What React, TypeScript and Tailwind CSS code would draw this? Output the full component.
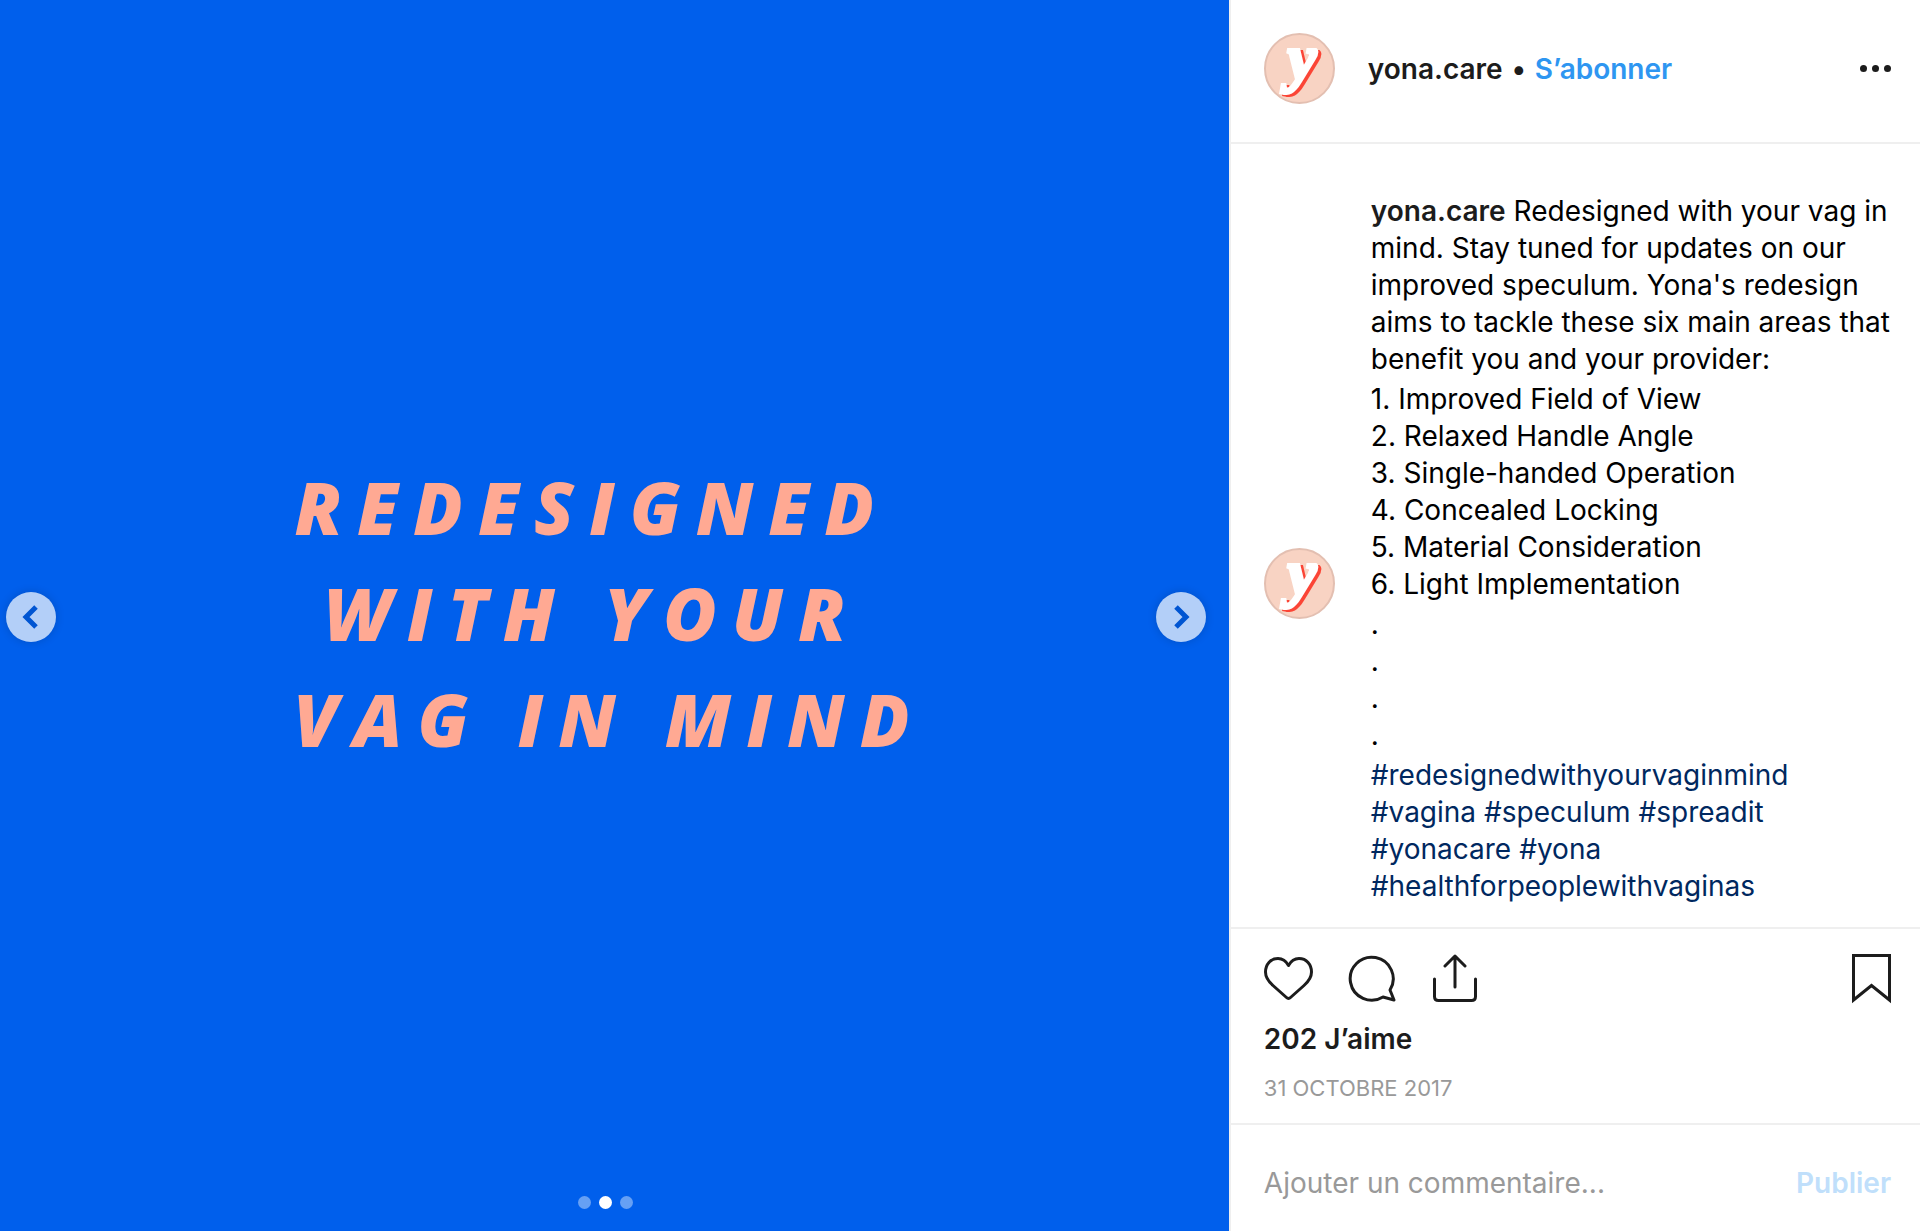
import type { ReactNode } from "react";

const areas = [
  "1. Improved Field of View",
  "2. Relaxed Handle Angle",
  "3. Single-handed Operation",
  "4. Concealed Locking",
  "5. Material Consideration",
  "6. Light Implementation",
];

const tagRows = [
  ["#redesignedwithyourvaginmind"],
  ["#vagina", "#speculum", "#spreadit"],
  ["#yonacare", "#yona"],
  ["#healthforpeoplewithvaginas"],
];

function Avatar() {
  return (
    <svg viewBox="0 0 71 71" className="size-[71px] shrink-0 overflow-visible" role="img" aria-label="yona.care">
      <circle cx="35.5" cy="35.5" r="34.5" fill="#f8d3c3" stroke="#e3bfb1" strokeWidth="2" />
      <text
        x="38"
        y="46"
        fontFamily="'Liberation Serif', serif"
        fontSize="64"
        fontWeight="700"
        fontStyle="italic"
        textAnchor="middle"
        fill="#ffffff"
        stroke="#ffffff"
        strokeWidth="4"
        className="[filter:drop-shadow(3px_2px_0_#fb4536)]"
      >
        y
      </text>
    </svg>
  );
}

function ArrowButton({ label, d }: { label: string; d: string }) {
  return (
    <button
      type="button"
      aria-label={label}
      className="flex size-[50px] items-center justify-center rounded-full bg-[#b3cff8] shadow-[0_0_10px_rgba(0,0,0,0.16)]"
    >
      <svg viewBox="0 0 24 24" className="size-6" fill="none" stroke="#0055d2" strokeWidth="5">
        <path d={d} />
      </svg>
    </button>
  );
}

function IconButton({ label, children }: { label: string; children: ReactNode }) {
  return (
    <button type="button" aria-label={label} className="h-[50px]">
      <svg
        viewBox="0 0 50 50"
        className="size-[50px]"
        fill="none"
        stroke="#1c1c1c"
        strokeWidth="3"
        strokeLinejoin="round"
        strokeLinecap="round"
      >
        {children}
      </svg>
    </button>
  );
}

export default function App() {
  return (
    <article className="flex min-h-screen bg-white font-['Inter',sans-serif] text-[28px] text-[#1c1c1c]">
      <section className="flex flex-1 flex-col bg-[#005fec] pr-[17px]">
        <div className="h-15" />
        <div className="flex flex-1 items-center justify-between px-[6px]">
          <ArrowButton label="Précédent" d="M17 2 L7 12 L17 22" />
          <h1 className="pr-7 pb-2 text-center font-['Open_Sans',sans-serif] text-[73px] leading-[106px] font-extrabold whitespace-pre text-[#ffa993] italic tracking-[15px]">
            {"REDESIGNED\nWITH YOUR\n VAG IN MIND"}
          </h1>
          <ArrowButton label="Suivant" d="M7 2 L17 12 L7 22" />
        </div>
        <div className="flex h-[58px] items-center justify-center gap-2">
          <span className="size-[13px] rounded-full bg-[#66a0f4]" />
          <span className="size-[13px] rounded-full bg-white" />
          <span className="size-[13px] rounded-full bg-[#66a0f4]" />
        </div>
      </section>

      <aside className="flex w-[36%] flex-col border-l-2 border-[#efefef]">
        <header className="flex h-36 items-center border-b-2 border-[#efefef] pr-[29px] pb-[5px] pl-[33px]">
          <Avatar />
          <div className="ml-[33px] flex items-center gap-[9px] font-semibold">
            <a href="#profile">yona.care</a>
            <span>•</span>
            <button type="button" className="text-[#2e96f1]">S’abonner</button>
          </div>
          <button type="button" aria-label="Plus d’options" className="ml-auto flex gap-[5px]">
            <span className="size-[7px] rounded-full bg-[#1c1c1c]" />
            <span className="size-[7px] rounded-full bg-[#1c1c1c]" />
            <span className="size-[7px] rounded-full bg-[#1c1c1c]" />
          </button>
        </header>

        <div className="flex flex-1 items-center pt-[26px] pl-[33px]">
          <div className="pt-[70px]">
            <Avatar />
          </div>
          <div className="ml-9 flex flex-col gap-[3px] leading-[37px] whitespace-nowrap text-black">
            <p>
              <a href="#profile" className="font-semibold text-[#1c1c1c]">yona.care</a> Redesigned with your vag in
              <br />
              mind. Stay tuned for updates on our
              <br />
              improved speculum. Yona's redesign
              <br />
              aims to tackle these six main areas that
              <br />
              benefit you and your provider:
            </p>
            <ul>
              {areas.map((area) => (
                <li key={area}>{area}</li>
              ))}
            </ul>
            <p className="whitespace-pre">{".\n.\n.\n."}</p>
            <div className="text-[#00285f]">
              {tagRows.map((row) => (
                <p key={row[0]} className="flex gap-2">
                  {row.map((tag) => (
                    <a key={tag} href="#tags">{tag}</a>
                  ))}
                </p>
              ))}
            </div>
          </div>
        </div>

        <div className="border-t-2 border-[#efefef] pt-[25px] pr-[29px] pb-[19px] pl-[33px]">
          <div className="flex gap-[34px]">
            <IconButton label="J’aime">
              <path d="M24.5 11.5 C22 7 18 4.5 14 4.5 C6.5 4.5 1.5 10.5 1.5 18 C1.5 24 4.5 27.5 9 31.5 L22.5 43.5 Q24.5 45.5 26.5 43.5 L40 31.5 C44.5 27.5 47.5 24 47.5 18 C47.5 10.5 42.5 4.5 35 4.5 C31 4.5 27 7 24.5 11.5 Z" />
            </IconButton>
            <IconButton label="Commenter">
              <path d="M42 36 A21.5 21.5 0 1 0 35 43 L46 46 Z" />
            </IconButton>
            <IconButton label="Partager">
              <path d="M2.5 25 V42.5 Q2.5 46.5 6.5 46.5 H39.5 Q43.5 46.5 43.5 42.5 V25 M23 33 V2 M13 12 L23 2 L33 12" />
            </IconButton>
            <button type="button" aria-label="Enregistrer" className="ml-auto h-[50px]">
              <svg viewBox="0 0 39 50" className="h-[50px] w-[39px]" fill="none" stroke="#1c1c1c" strokeWidth="3">
                <path d="M1.5 1.5 H37.5 V46 L19.5 31.5 L1.5 46 Z" />
              </svg>
            </button>
          </div>
          <p className="mt-4 leading-[38px] font-semibold">202 J’aime</p>
          <time dateTime="2017-10-31" className="mt-[14px] block text-[22px] leading-8 text-[#999999]">
            31 OCTOBRE 2017
          </time>
        </div>

        <form className="flex h-[108px] items-center border-t-2 border-[#efefef] pt-[10px] pr-[29px] pl-[33px]">
          <input
            type="text"
            aria-label="Ajouter un commentaire"
            placeholder="Ajouter un commentaire..."
            className="min-w-0 flex-1 outline-none placeholder:text-[#999999]"
          />
          <button type="button" className="font-semibold text-[#c0dffb]">Publier</button>
        </form>
      </aside>
    </article>
  );
}
